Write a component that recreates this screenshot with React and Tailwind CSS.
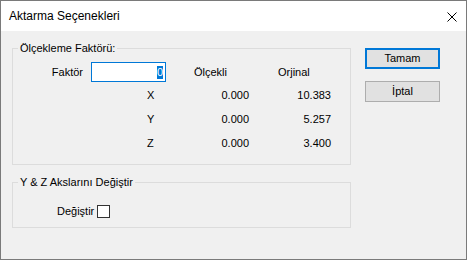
import React from 'react';

const rows = [
  { axis: 'X', scaled: '0.000', orig: '10.383' },
  { axis: 'Y', scaled: '0.000', orig: '5.257' },
  { axis: 'Z', scaled: '0.000', orig: '3.400' },
];

function Group({ title, className = '', children }) {
  return (
    <fieldset className={`border border-[#dcdcdc] ${className}`}>
      <legend className="ml-[5px] px-[2px] text-[11px] leading-[13px]">{title}</legend>
      {children}
    </fieldset>
  );
}

export default function App() {
  return (
    <div className="w-[467px] h-[260px] flex flex-col bg-[#f0f0f0] border border-[#7a7a7a] text-black text-[11px] font-['Liberation_Sans',Arial,sans-serif] overflow-hidden">
      {/* Title bar */}
      <div className="h-[30px] shrink-0 bg-white flex items-center justify-between pl-[8px] pr-[9px]">
        <span className="text-[12px]">Aktarma Seçenekleri</span>
        <svg width="10" height="10" viewBox="0 0 10 10" className="mt-[1px]">
          <path d="M0.5 0.5 L9.5 9.5 M9.5 0.5 L0.5 9.5" stroke="#000" strokeWidth="1" fill="none" />
        </svg>
      </div>

      {/* Body */}
      <div className="flex pl-[11px]">
        <div className="w-[339px] flex flex-col">
          <Group title="Ölçekleme Faktörü:" className="mt-[11px]">
            <div className="pt-[6px] pb-[9px]">
              <div className="h-[22px] flex items-center">
                <span className="w-[78px] pr-[8px] text-right">Faktör</span>
                <div className="w-[75px] h-[20px] bg-white border border-[#0078d7] flex items-center justify-end pr-[2px]">
                  <span className="bg-[#0078d7] text-white leading-[13px]">0</span>
                </div>
                <span className="w-[84px] ml-[28px]">Ölçekli</span>
                <span>Orjinal</span>
              </div>
              {rows.map(r => (
                <div key={r.axis} className="h-[24px] flex items-center">
                  <span className="w-[20px] ml-[134px]">{r.axis}</span>
                  <span className="w-[82px] text-right">{r.scaled}</span>
                  <span className="w-[82px] text-right">{r.orig}</span>
                </div>
              ))}
            </div>
          </Group>

          <Group title="Y & Z Akslarını Değiştir" className="mt-[11px]">
            <div className="pt-[14px] pb-[8px]">
              <div className="h-[16px] flex items-center pl-[44px] gap-[3px]">
                <span>Değiştir</span>
                <span className="w-[13px] h-[13px] bg-white border border-[#333]" />
              </div>
            </div>
          </Group>
        </div>

        <div className="ml-[14px] pt-[17px] flex flex-col gap-[12px]">
          <button className="w-[75px] h-[21px] bg-[#e1e1e1] border-2 border-[#0078d7] text-[11px]">Tamam</button>
          <button className="w-[75px] h-[21px] bg-[#e1e1e1] border border-[#adadad] text-[11px]">İptal</button>
        </div>
      </div>
    </div>
  );
}
